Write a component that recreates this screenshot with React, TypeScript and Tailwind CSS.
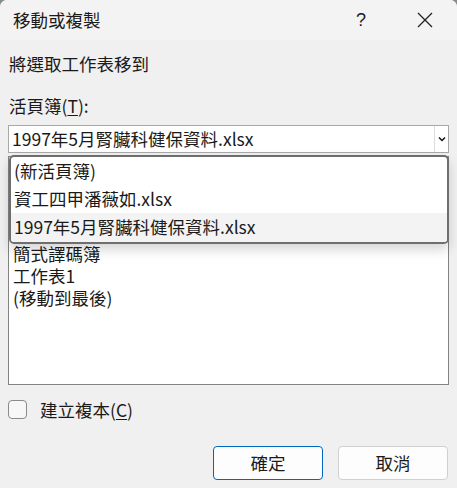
import React from "react";

const font = { fontFamily: '"Noto Sans CJK TC", "Noto Sans", sans-serif' };

export default function App() {
  return (
    <div className="w-[457px] h-[488px] bg-[#8a8a8a]" style={font}>
      <div className="relative w-[457px] h-[488px] bg-[#f0f0f0] rounded-t-[7px] overflow-hidden text-[#1a1a1a]">
        {/* title bar */}
        <div className="h-[40px] bg-[#f3f3f3] flex items-center">
          <div className="pl-[13px] text-[17.5px] leading-none flex-1">移動或複製</div>
          <div className="w-[40px] text-[18px] text-center leading-none mr-[34px] font-['Liberation_Sans']">?</div>
          <div className="w-[20px] mr-[22px] flex items-center justify-center">
            <svg width="18" height="18" viewBox="0 0 18 18">
              <path d="M2 2 L16 16 M16 2 L2 16" stroke="#222" strokeWidth="1.3" />
            </svg>
          </div>
        </div>
        {/* body */}
        <div className="px-[8px] pt-[12px]">
          <div className="pl-[1px] text-[17.5px] leading-[24px]">將選取工作表移到</div>
          <div className="pl-[1px] mt-[18px] text-[17.5px] leading-[24px]">
            活頁簿(<span className="underline underline-offset-2">T</span>):
          </div>
          <div className="mt-[7px] h-[28px] bg-white border border-[#a8a8a8] flex items-center">
            <div className="flex-1 pl-[3px] text-[17.5px] leading-none">1997年5月腎臟科健保資料.xlsx</div>
            <div className="w-[14px] h-full border-l border-[#dcdcdc] flex items-center justify-center">
              <svg width="8" height="6" viewBox="0 0 8 6">
                <path d="M1 1.5 L4 4.5 L7 1.5" stroke="#111" strokeWidth="1.5" fill="none" />
              </svg>
            </div>
          </div>
          <div className="mt-[3px] h-[229px] bg-white border border-[#838383] pt-[86px] pl-[4px] text-[17.5px] leading-[22px]">
            <div>簡式譯碼簿</div>
            <div>工作表1</div>
            <div>(移動到最後)</div>
          </div>
          <div className="mt-[15px] flex items-center">
            <div className="w-[19px] h-[19px] rounded-[4px] border border-[#8a8a8a] bg-[#f7f7f7]" />
            <div className="ml-[13px] text-[17.5px] leading-none">
              建立複本(<span className="underline underline-offset-2">C</span>)
            </div>
          </div>
          <div className="mt-[27px] flex justify-end gap-[15px] pr-[1px]">
            <button className="w-[110px] h-[34px] rounded-[4px] border border-[#0067c0] bg-[#fdfdfd] text-[17.5px] leading-none">確定</button>
            <button className="w-[110px] h-[34px] rounded-[4px] border border-[#d0d0d0] bg-[#fdfdfd] text-[17.5px] leading-none">取消</button>
          </div>
        </div>
        {/* dropdown overlay */}
        <div className="absolute left-[9px] top-[155px] w-[440px] h-[89px] bg-white border-2 border-[#6e6e6e] rounded-[5px] overflow-hidden shadow-[0_6px_12px_rgba(0,0,0,0.16)] text-[17.5px]">
          <div className="h-[28px] pl-[3px] flex items-center">(新活頁簿)</div>
          <div className="h-[28px] pl-[3px] flex items-center">資工四甲潘薇如.xlsx</div>
          <div className="h-[29px] pl-[3px] flex items-center bg-[#f3f3f3]">1997年5月腎臟科健保資料.xlsx</div>
        </div>
      </div>
    </div>
  );
}
